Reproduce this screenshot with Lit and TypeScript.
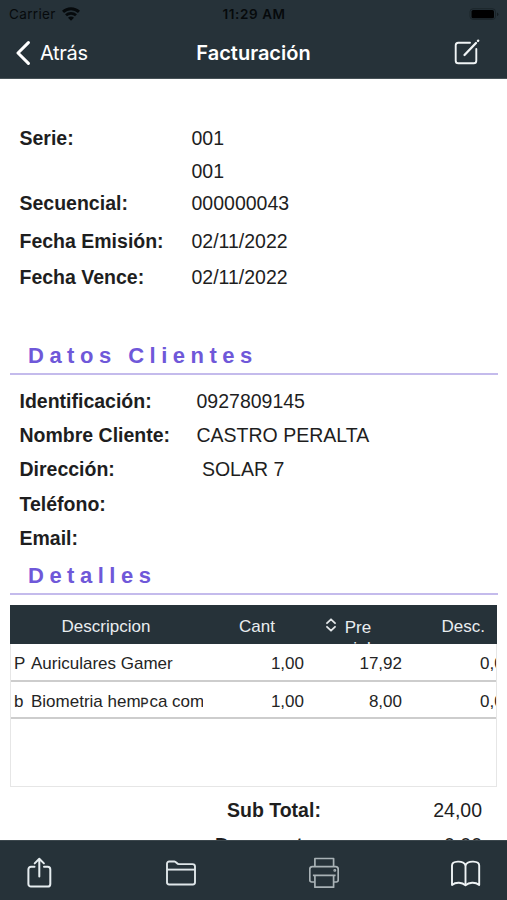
import { LitElement, html, css, svg } from "lit";
import { customElement } from "lit/decorators.js";

const icons = {
  wifi: svg`<svg viewBox="0 0 18 14" width="18" height="14" fill="none" stroke="#060a0c">
    <path d="M1 4.900a11.500 11.500 0 0 1 16 0" stroke-width="3"/>
    <path d="M4 8.300a7.200 7.200 0 0 1 10 0" stroke-width="2.700"/>
    <path d="M9 13.800 6 10.800a4.200 4.200 0 0 1 6 0z" fill="#060a0c" stroke="none"/></svg>`,
  battery: svg`<svg viewBox="0 0 30 12" width="30" height="12">
    <rect x="1" y="0.8" width="25.5" height="10.600" rx="3" fill="none" stroke="#1a2429" stroke-width="1"/>
    <rect x="2.500" y="1.900" width="22.500" height="8.400" rx="1.600" fill="#000"/>
    <path d="M28 4.400v3.600q1.400-.4 1.400-1.800T28 4.400z" fill="#151d21"/></svg>`,
  back: svg`<svg viewBox="0 0 16 24" width="16" height="24" fill="none" stroke="#fff" stroke-width="3" stroke-linecap="round" stroke-linejoin="round">
    <path d="M13.400 1.600 3 12l10.400 10.400"/></svg>`,
  edit: svg`<svg viewBox="0 0 28 28" width="28" height="28" fill="none" stroke="#f0f4f5" stroke-width="1.900" stroke-linecap="round">
    <path d="M17 3.700H5.300a2.600 2.600 0 0 0-2.600 2.600v15.400a2.600 2.600 0 0 0 2.600 2.600h15.400a2.600 2.600 0 0 0 2.600-2.600V10"/>
    <path d="M11.500 16 23 4" stroke-width="2.300"/><path d="m25 1.900.2-.2" stroke-width="2.400"/></svg>`,
  share: svg`<svg viewBox="24 856 30 34" width="30" height="34" fill="none" stroke="#e6edf0" stroke-width="2" stroke-linecap="round" stroke-linejoin="round">
    <path d="M34.500 866.800H31a2.600 2.600 0 0 0-2.600 2.600v14.600a2.600 2.600 0 0 0 2.600 2.600h16.700a2.600 2.600 0 0 0 2.600-2.600v-14.600a2.600 2.600 0 0 0-2.600-2.600H44"/>
    <path d="M39.300 876.500V858.800M34.700 863.400l4.600-4.600 4.600 4.600"/></svg>`,
  folder: svg`<svg viewBox="166 856 30 34" width="30" height="34" fill="none" stroke="#dfe6e9" stroke-width="1.900" stroke-linejoin="round">
    <path d="M167 882.300v-18.600a2.200 2.200 0 0 1 2.200-2.200h5.200c1.900 0 2.300 2.600 4.400 2.600h13.700a2.500 2.500 0 0 1 2.500 2.500v15.700a2.200 2.200 0 0 1-2.200 2.200h-23.600a2.200 2.200 0 0 1-2.200-2.200z"/>
    <path d="M167 869.600h28"/></svg>`,
  print: svg`<svg viewBox="308.600 856 30 34" width="30" height="34" fill="none" stroke="#a9b2b6" stroke-width="1.700" stroke-linejoin="round">
    <path d="M314.500 866.700v-8.200h18.700v8.200"/>
    <path d="M314.500 882h-3.300a1.800 1.800 0 0 1-1.800-1.800v-11a2.500 2.500 0 0 1 2.500-2.500h23.400a2.500 2.500 0 0 1 2.500 2.500v11a1.800 1.800 0 0 1-1.800 1.800h-2.800"/>
    <path d="M314.500 875.300h18.700v11.900h-18.700zM312.500 875.300h22.700"/><circle cx="334.400" cy="870.400" r=".6"/></svg>`,
  book: svg`<svg viewBox="451 856 30 34" width="30" height="34" fill="none" stroke="#eef3f5" stroke-width="1.900" stroke-linejoin="round">
    <path d="M465.500 885.300c-3.300-3-9.500-3.600-13.500-.3v-19.600c0-4.600 11-5.400 13.500-.4 2.500-5 13.700-4.200 13.700.4V885c-4-3.300-10.400-2.700-13.700.3z"/>
    <path d="M465.500 865v20"/></svg>`,
  sort: svg`<svg viewBox="0 0 10 14" width="10" height="14" fill="none" stroke="#e3e7e9" stroke-width="1.800" stroke-linecap="round" stroke-linejoin="round">
    <path d="M1 5.200 5 1.300l4 3.900M1 8.800l4 3.900 4-3.900"/></svg>`,
};

@customElement("app-root")
export class AppRoot extends LitElement {
  static styles = css`
    :host { display: flex; flex-direction: column; width: 507px; height: 900px; overflow: hidden;
      background: #fff; color: #1e1e1e; font-family: "Liberation Sans", Arial, sans-serif; font-size: 19.500px; }
    * { box-sizing: border-box; }
    svg { display: block; flex: none; }
    .top { flex: none; height: 79px; background: #263239; border-bottom: 1px solid #475257; color: #fff; font-family: Inter, sans-serif; }
    .status { height: 27px; display: grid; grid-template-columns: 1fr auto 1fr; align-items: center; padding: 0 8px 0 9px;
      color: #060a0c; font-size: 13.500px; }
    .carrier { display: flex; align-items: center; gap: 6px; letter-spacing: .35px; }
    .time { font-weight: 600; letter-spacing: .6px; }
    .battery { justify-self: end; }
    .nav { height: 51px; display: grid; grid-template-columns: 1fr auto 1fr; align-items: center; padding: 1px 15px 0; }
    .back { display: flex; align-items: center; gap: 9px; font-size: 20px; letter-spacing: -.3px; }
    .title { font-weight: 600; font-size: 20px; letter-spacing: 0; }
    .edit { justify-self: end; margin-right: 11px; }
    .main { flex: 1; min-height: 0; overflow: hidden; padding-top: 43px; }
    .row { display: grid; grid-template-columns: 172px 1fr; align-items: center; padding-left: 19.500px; white-space: pre; }
    .label { font-weight: 700; }
    .h33 { height: 33px; } .h30 { height: 31px; } .h46 { height: 45px; } .h26 { height: 27px; }
    .client { grid-template-columns: 177px 1fr; height: 34.200px; }
    .section { margin: 2px 9px 0 10px; padding-left: 18px; height: 38px; line-height: 37px; border-bottom: 2px solid #c4bbec;
      color: #6f58d9; font-weight: 700; font-size: 22px; letter-spacing: 5.500px; }
    .first { margin-top: 46px; margin-bottom: 9.500px; }
    .table { margin: 10px 10px 0; height: 182px; font-size: 17px; display: flex; flex-direction: column; }
    .body { flex: 1; border: 1px solid #e6e6e6; border-top: 0; overflow: hidden; }
    .head, .item { display: grid; grid-template-columns: 192px 101px 98px 96px; white-space: nowrap; }
    .head { height: 39px; background: #263239; color: #e9edef; line-height: 43px; overflow: hidden; text-align: center; }
    .head .cant { padding-left: 9px; }
    .price { display: flex; gap: 8px; padding-left: 23px; }
    .price svg { margin-top: 13px; }
    .wrap { width: 28px; text-align: center; padding-top: 12px; line-height: 21px; }
    .desc { text-align: right; padding-right: 12px; }
    .item { height: 37.500px; line-height: 39px; border-bottom: 2px solid #cdcdcd; color: #242424; }
    .name { display: flex; overflow: hidden; padding-left: 3px; }
    .code { width: 17px; flex: none; }
    .small { font-size: 12px; letter-spacing: .8px; -webkit-text-stroke: .3px #242424; }
    .num { text-align: right; }
    .clip { overflow: hidden; padding-left: 78px; }
    .total { display: flex; justify-content: space-between; padding: 0 25px 0 227px; height: 34px; line-height: 47px; }
    .next { padding-left: 215px; line-height: 48px; }
    .bar { flex: none; height: 60px; background: #263239; border-top: 1px solid #3c474d; display: flex; justify-content: space-between; padding: 15px 26px 0 24px; }
  `;

  private row(label: string, value: string, cls: string) {
    return html`<div class="row ${cls}"><span class="label">${label}</span><span>${value}</span></div>`;
  }

  render() {
    return html`
      <header class="top">
        <div class="status">
          <div class="carrier"><span>Carrier</span>${icons.wifi}</div>
          <div class="time">11:29 AM</div>
          <div class="battery">${icons.battery}</div>
        </div>
        <div class="nav">
          <div class="back">${icons.back}<span>Atrás</span></div>
          <div class="title">Facturación</div>
          <div class="edit">${icons.edit}</div>
        </div>
      </header>
      <main class="main">
        ${this.row("Serie:", "001", "h33")}
        ${this.row("", "001", "h33")}
        ${this.row("Secuencial:", "000000043", "h30")}
        ${this.row("Fecha Emisión:", "02/11/2022", "h46")}
        ${this.row("Fecha Vence:", "02/11/2022", "h26")}
        <div class="section first">Datos Clientes</div>
        ${this.row("Identificación:", "0927809145", "client")}
        ${this.row("Nombre Cliente:", "CASTRO PERALTA", "client")}
        ${this.row("Dirección:", " SOLAR 7", "client")}
        ${this.row("Teléfono:", "", "client")}
        ${this.row("Email:", "", "client")}
        <div class="section">Detalles</div>
        <div class="table">
          <div class="head">
            <span>Descripcion</span><span class="cant">Cant</span>
            <span class="price">${icons.sort}<span class="wrap">Pre<br>cio!</span></span>
            <span class="desc">Desc.</span>
          </div>
          <div class="body">
            <div class="item">
              <span class="name"><span class="code">P</span><span>Auriculares Gamer</span></span>
              <span class="num">1,00</span><span class="num">17,92</span><span class="clip">0,00</span>
            </div>
            <div class="item">
              <span class="name"><span class="code">b</span><span>Biometria hem<span class="small">P</span>ca com</span></span>
              <span class="num">1,00</span><span class="num">8,00</span><span class="clip">0,00</span>
            </div>
          </div>
        </div>
        <div class="total"><span class="label">Sub Total:</span><span>24,00</span></div>
        <div class="total next"><span class="label">Descuento:</span><span>0,00</span></div>
      </main>
      <footer class="bar">${icons.share}${icons.folder}${icons.print}${icons.book}</footer>
    `;
  }
}
